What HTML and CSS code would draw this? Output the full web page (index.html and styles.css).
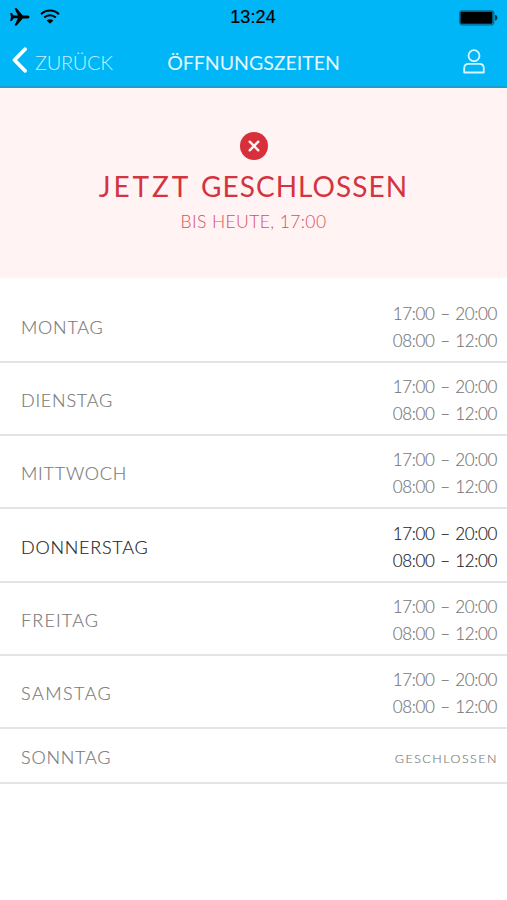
FILE: index.html
```html
<!DOCTYPE html>
<html lang="de">
<head>
<meta charset="utf-8">
<title>Öffnungszeiten</title>
<link rel="stylesheet" href="styles.css">
</head>
<body>
<header class="top">
  <div class="status">
    <div class="signals">
      <svg width="20" height="18" viewBox="0 0 20 18"><path d="M.2 5h1.500l2 2.600h4.200L4.500.3h2.200l6 7.200h4.600c1.200 0 2.200.6 2.200 1.400s-1 1.500-2.200 1.500h-4.600l-6 7.100H4.500l3.400-7.200H3.700l-2 2.800H.2L1 8.900z"/></svg>
      <svg width="20" height="16" viewBox="0 0 20 16" fill="none" stroke="#000" stroke-width="2"><path d="M1 5.200c5-4.900 13-4.900 18 0M4.200 8.600c3.300-3.100 8.300-3.100 11.600 0"/><path d="M10 14.800l-3.300-3.200c1.800-1.700 4.800-1.700 6.600 0z" fill="#000" stroke="none"/></svg>
    </div>
    <time class="clock">13:24</time>
    <svg class="battery" width="39" height="16" viewBox="0 0 39 16"><rect x=".8" y=".8" width="34" height="14" rx="2.500" fill="none" stroke="#05648a" stroke-width="1.200"/><rect x="1.500" y="1.800" width="32" height="12" rx="1"/><path d="M36 5c1.600.3 2.400 1.300 2.400 2.700S37.600 10.200 36 10.500z" fill="#03364a"/></svg>
  </div>
  <nav class="nav">
    <a class="back">
      <svg width="16" height="26" viewBox="0 0 16 26" fill="none" stroke="#fff" stroke-width="3.800" stroke-linecap="round" stroke-linejoin="round"><path d="M13 2.200L2.500 13 13 23.800"/></svg>
      <span class="back-label">ZURÜCK</span>
    </a>
    <h1 class="title">ÖFFNUNGSZEITEN</h1>
    <svg class="user" width="22" height="25" viewBox="0 0 22 25" fill="none" stroke="#d8f6ff" stroke-width="1.800"><circle cx="11" cy="6.700" r="5.500"/><path d="M1.200 23.500v-4.200c0-2.800 2-4.500 4.600-4.500h10.400c2.600 0 4.600 1.700 4.600 4.500v4.200z" stroke-linejoin="round"/></svg>
  </nav>
</header>
<section class="banner">
  <svg width="28" height="28" viewBox="0 0 28 28"><circle cx="14" cy="14" r="14" fill="#d8303b"/><path d="M9.700 9.700l8.600 8.600M18.300 9.700l-8.600 8.600" stroke="#fff3f3" stroke-width="2.400" stroke-linecap="round"/></svg>
  <h2 class="state"><span class="now">JETZT</span> GESCHLOSSEN</h2>
  <p class="until">BIS HEUTE, 17:00</p>
</section>
<main class="days">
  <div class="day"><span class="name">MONTAG</span><div class="hours"><span>17:00 – 20:00</span><span>08:00 – 12:00</span></div></div>
  <div class="day"><span class="name">DIENSTAG</span><div class="hours"><span>17:00 – 20:00</span><span>08:00 – 12:00</span></div></div>
  <div class="day"><span class="name">MITTWOCH</span><div class="hours"><span>17:00 – 20:00</span><span>08:00 – 12:00</span></div></div>
  <div class="day today"><span class="name">DONNERSTAG</span><div class="hours"><span>17:00 – 20:00</span><span>08:00 – 12:00</span></div></div>
  <div class="day"><span class="name wide">FREITAG</span><div class="hours"><span>17:00 – 20:00</span><span>08:00 – 12:00</span></div></div>
  <div class="day"><span class="name wider">SAMSTAG</span><div class="hours"><span>17:00 – 20:00</span><span>08:00 – 12:00</span></div></div>
  <div class="day closed"><span class="name">SONNTAG</span><span class="none">GESCHLOSSEN</span></div>
</main>
</body>
</html>
```
FILE: styles.css
```css
* { box-sizing: border-box; margin: 0; }
body { background: #fff; font-family: Lato, sans-serif; font-weight: 300; min-height: 900px; }
svg { display: block; flex: none; }
.top { height: 88px; background: #00b6f7; border-bottom: 2px solid #1b9fcf; }
.status { height: 35px; display: grid; grid-template-columns: 1fr auto 1fr; align-items: center; padding: 0 9px 0 10px; }
.signals { display: flex; gap: 10px; align-items: center; margin-top: -2px; }
.clock { font: 400 18px/35px "Liberation Sans", sans-serif; letter-spacing: .1px; margin-left: -2px; -webkit-text-stroke: .2px #000; }
.battery { justify-self: end; }
.nav { height: 51px; display: grid; grid-template-columns: 1fr auto 1fr; align-items: center; padding: 0 22px 0 12px; }
.back { display: flex; align-items: center; gap: 7px; margin-top: -2px; }
.back-label { font-size: 20px; line-height: 26px; letter-spacing: -.3px; color: #c4f0ff; padding-top: 4px; }
.title { font-size: 19.500px; line-height: 26px; font-weight: 400; color: #e4f9ff; padding-top: 4px; margin: 0 -5px 0 5px; }
.user { justify-self: end; margin-top: 1px; }
.banner { height: 190px; background: #fff3f3; display: flex; flex-direction: column; align-items: center; padding-top: 44px; }
.state { margin-top: 8px; font-size: 28px; line-height: 36px; font-weight: 400; color: #d43440; letter-spacing: 1.050px; word-spacing: 1.500px; white-space: nowrap; }
.now { letter-spacing: 2.900px; }
.until { margin-top: 6px; font-size: 17.500px; line-height: 24px; color: #d9505b; letter-spacing: .4px; }
.days { padding-top: 11.500px; }
.day { height: 73.300px; display: flex; justify-content: space-between; align-items: center; padding: 3px 10px 0 21px; border-bottom: 2px solid #e4e4e4; color: #777; -webkit-text-stroke: .15px currentColor; }
.name { font-size: 18px; line-height: 26px; letter-spacing: .75px; }
.wide { letter-spacing: 1.150px; }
.wider { letter-spacing: 1.450px; }
.hours { display: flex; flex-direction: column; align-items: flex-end; font-size: 17px; line-height: 27px; letter-spacing: -.350px; word-spacing: 1.300px; }
.today { color: #222; }
.closed { height: 55px; }
.none { font-size: 12.500px; letter-spacing: 1.500px; margin-right: -1px; padding-top: 3px; }
```
